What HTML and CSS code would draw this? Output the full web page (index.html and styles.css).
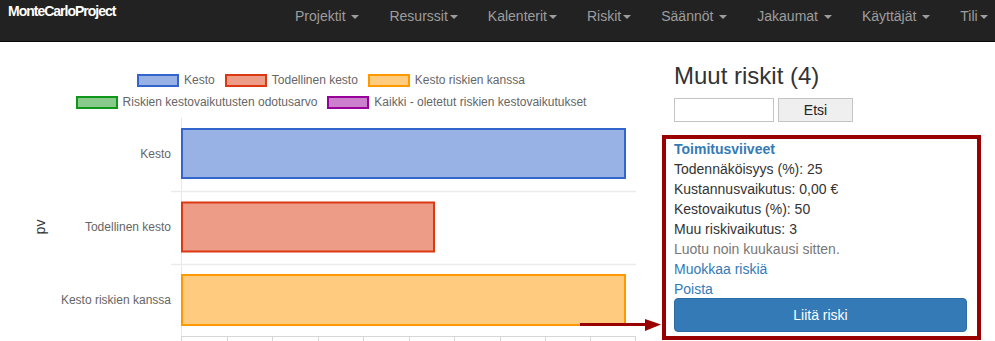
FILE: index.html
```html
<!DOCTYPE html>
<html lang="fi">
<head>
    <meta charset="UTF-8">
    <meta name="viewport" content="width=device-width, initial-scale=1.0">
    <link rel="stylesheet" href="styles.css">
    <title>Riski - MonteCarloProject</title>
</head>
<body>
    <nav class="navbar">
        <a class="brand" href="#">MonteCarloProject</a>
        <ul class="nav">
            <li><a href="#">Projektit <span class="caret"></span></a></li>
            <li><a href="#">Resurssit<span class="caret"></span></a></li>
            <li><a href="#">Kalenterit<span class="caret"></span></a></li>
            <li><a href="#">Riskit<span class="caret"></span></a></li>
            <li><a href="#">Säännöt <span class="caret"></span></a></li>
            <li><a href="#">Jakaumat <span class="caret"></span></a></li>
            <li><a href="#">Käyttäjät <span class="caret"></span></a></li>
            <li><a href="#">Tili<span class="caret"></span></a></li>
        </ul>
    </nav>

    <div class="page">
        <div class="chart-col">
            <div class="legend">
                <div class="legend-row">
                    <div class="legend-item"><span class="swatch blue"></span>Kesto</div>
                    <div class="legend-item"><span class="swatch red"></span>Todellinen kesto</div>
                    <div class="legend-item"><span class="swatch orange"></span>Kesto riskien kanssa</div>
                </div>
                <div class="legend-row">
                    <div class="legend-item"><span class="swatch green"></span>Riskien kestovaikutusten odotusarvo</div>
                    <div class="legend-item"><span class="swatch purple"></span>Kaikki - oletetut riskien kestovaikutukset</div>
                </div>
            </div>

            <svg class="chart" width="662" height="228" viewBox="0 0 662 228">
                <!-- grid -->
                <line x1="181.5" y1="5" x2="181.5" y2="223" stroke="#e8e8e8" stroke-width="1"/>
                <line x1="171" y1="78.5" x2="636" y2="78.5" stroke="#ebebeb" stroke-width="1.5"/>
                <line x1="171" y1="151.5" x2="636" y2="151.5" stroke="#ebebeb" stroke-width="1.5"/>
                <line x1="181" y1="223.5" x2="636" y2="223.5" stroke="#d6d6d6" stroke-width="1"/>
                <g stroke="#d6d6d6" stroke-width="1">
                    <line x1="181.5" y1="223" x2="181.5" y2="230"/>
                    <line x1="227.5" y1="223" x2="227.5" y2="230"/>
                    <line x1="272.5" y1="223" x2="272.5" y2="230"/>
                    <line x1="318.5" y1="223" x2="318.5" y2="230"/>
                    <line x1="363.5" y1="223" x2="363.5" y2="230"/>
                    <line x1="409.5" y1="223" x2="409.5" y2="230"/>
                    <line x1="454.5" y1="223" x2="454.5" y2="230"/>
                    <line x1="500.5" y1="223" x2="500.5" y2="230"/>
                    <line x1="545.5" y1="223" x2="545.5" y2="230"/>
                    <line x1="590.5" y1="223" x2="590.5" y2="230"/>
                    <line x1="635.5" y1="223" x2="635.5" y2="230"/>
                </g>

                <!-- bars -->
                <rect x="182" y="16" width="443" height="49" fill="#99b2e5" stroke="#3366cc" stroke-width="2"/>
                <rect x="182" y="89.5" width="252" height="49" fill="#ed9c88" stroke="#dc3912" stroke-width="2"/>
                <rect x="182" y="162" width="443" height="50" fill="#ffcc7f" stroke="#ff9900" stroke-width="2"/>

                <!-- labels -->
                <g class="axis-label" text-anchor="end">
                    <text x="171" y="44.5">Kesto</text>
                    <text x="171" y="117.5">Todellinen kesto</text>
                    <text x="171" y="190.5">Kesto riskien kanssa</text>
                </g>
                <text class="axis-title" x="45" y="114" text-anchor="middle" transform="rotate(-90 45 114)">pv</text>

                <!-- arrow to the risk -->
                <line x1="580" y1="211.5" x2="648" y2="211.5" stroke="#990000" stroke-width="3"/>
                <polygon points="645,206 661,211.5 645,218" fill="#990000"/>
            </svg>
        </div>

        <div class="side">
            <h3>Muut riskit (4)</h3>
            <form class="search">
                <input type="text">
                <button type="button">Etsi</button>
            </form>

            <div class="risk">
                <a class="risk-title" href="#">Toimitusviiveet</a>
                <div>Todennäköisyys (%): 25</div>
                <div>Kustannusvaikutus: 0,00 €</div>
                <div>Kestovaikutus (%): 50</div>
                <div>Muu riskivaikutus: 3</div>
                <div class="muted">Luotu noin kuukausi sitten.</div>
                <a href="#">Muokkaa riskiä</a>
                <a href="#">Poista</a>
                <button class="btn-primary" type="button">Liitä riski</button>
            </div>
        </div>
    </div>
</body>
</html>
```

FILE: styles.css
```css
html, body {
    overflow: hidden;
}

body {
    margin: 0;
    font-family: "Liberation Sans", Arial, sans-serif;
    font-size: 14px;
    line-height: 20px;
    color: #333;
    background-color: #fff;
}

a {
    color: #337ab7;
    text-decoration: none;
}

/* navbar */
.navbar {
    display: flex;
    align-items: flex-start;
    height: 41px;
    padding-left: 8px;
    background-color: #222;
    border-bottom: 1px solid #080808;
    overflow: hidden;
}

.brand {
    flex: 0 0 272px;
    padding-top: 1px;
    color: #fff;
    font-weight: bold;
    letter-spacing: -1px;
}

.nav {
    display: flex;
    list-style: none;
    margin: 0;
    padding: 6px 0 0;
}

.nav li {
    flex-shrink: 0;
    white-space: nowrap;
}

.nav a {
    display: block;
    padding: 0 15px;
    color: #9d9d9d;
}

.caret {
    display: inline-block;
    width: 0;
    height: 0;
    margin-left: 2px;
    vertical-align: middle;
    border-top: 4px solid;
    border-left: 4px solid transparent;
    border-right: 4px solid transparent;
}

/* main */
.page {
    display: flex;
}

.chart-col {
    flex: 0 0 662px;
}

.legend {
    display: flex;
    flex-direction: column;
    align-items: center;
    margin-top: 27px;
    font-size: 12px;
    color: #666;
}

.legend-row {
    display: flex;
    align-items: center;
    gap: 10px;
    height: 22px;
}

.legend-item {
    display: flex;
    align-items: center;
    gap: 5px;
}

.swatch {
    width: 38px;
    height: 9px;
    border: 2px solid;
}

.swatch.blue { background-color: #99b2e5; border-color: #3366cc; }
.swatch.red { background-color: #ed9c88; border-color: #dc3912; }
.swatch.orange { background-color: #ffcc7f; border-color: #ff9900; }
.swatch.green { background-color: #87ca8b; border-color: #109618; }
.swatch.purple { background-color: #cc7fcc; border-color: #990099; }

.chart {
    display: block;
}

.axis-label {
    font-family: "Liberation Sans", Arial, sans-serif;
    font-size: 12px;
    fill: #666;
}

.axis-title {
    font-family: "Liberation Sans", Arial, sans-serif;
    font-size: 14px;
    fill: #333;
}

/* side column */
.side {
    flex: 0 0 319px;
    padding-top: 21px;
}

.side h3 {
    margin: 0 0 9px;
    padding-left: 12px;
    font-size: 24px;
    font-weight: 500;
    line-height: 26.4px;
}

.search {
    display: flex;
    gap: 4px;
    margin: 0 0 13px;
    padding-left: 12px;
}

.search input {
    box-sizing: border-box;
    width: 100px;
    height: 24px;
    margin: 0;
    border: 1px solid #c4c4c4;
}

.search button {
    box-sizing: border-box;
    width: 75px;
    height: 24px;
    margin: 0;
    font-family: "Liberation Sans", Arial, sans-serif;
    font-size: 14px;
    color: #222;
    background-color: #efefef;
    border: 1px solid #c4c4c4;
}

.risk {
    display: flex;
    flex-direction: column;
    padding: 0 10px 4px 8px;
    border: 4px solid #990000;
}

.risk a {
    align-self: flex-start;
}

.risk-title {
    font-weight: bold;
}

.muted {
    color: #777;
}

.btn-primary {
    height: 34px;
    margin-top: -1px;
    font-family: "Liberation Sans", Arial, sans-serif;
    font-size: 14px;
    color: #fff;
    background-color: #337ab7;
    border: 1px solid #2e6da4;
    border-radius: 4px;
}
```
